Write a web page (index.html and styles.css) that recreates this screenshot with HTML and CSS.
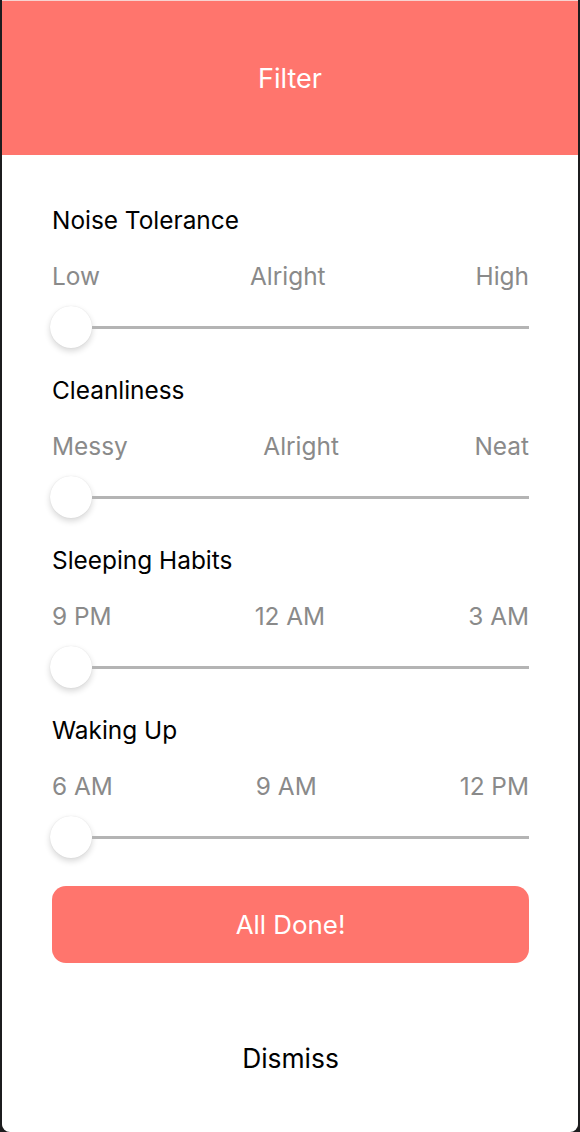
FILE: index.html
```html
<!DOCTYPE html>
<html>
<head>
<meta charset="utf-8">
<link rel="stylesheet" href="styles.css">
</head>
<body>
<div class="screen">
  <header class="header"><h1 class="title">Filter</h1></header>
  <main class="content">
    <section class="filter">
      <h2 class="filter-name">Noise Tolerance</h2>
      <div class="scale"><span>Low</span><span>Alright</span><span>High</span></div>
      <div class="slider"><div class="thumb"></div><div class="track"></div></div>
    </section>
    <section class="filter">
      <h2 class="filter-name">Cleanliness</h2>
      <div class="scale"><span>Messy</span><span>Alright</span><span>Neat</span></div>
      <div class="slider"><div class="thumb"></div><div class="track"></div></div>
    </section>
    <section class="filter">
      <h2 class="filter-name">Sleeping Habits</h2>
      <div class="scale"><span>9 PM</span><span>12 AM</span><span>3 AM</span></div>
      <div class="slider"><div class="thumb"></div><div class="track"></div></div>
    </section>
    <section class="filter">
      <h2 class="filter-name">Waking Up</h2>
      <div class="scale"><span>6 AM</span><span>9 AM</span><span>12 PM</span></div>
      <div class="slider"><div class="thumb"></div><div class="track"></div></div>
    </section>
    <button class="done">All Done!</button>
    <button class="dismiss">Dismiss</button>
  </main>
</div>
</body>
</html>
```

FILE: styles.css
```css
html, body {
  margin: 0;
  padding: 0;
  background: #1c1c1e;
}
body {
  font-family: Inter, "Noto Sans", "Liberation Sans", sans-serif;
}
.screen {
  width: 576px;
  height: 1131px;
  margin: 1px 2px 0 2px;
  background: #ffffff;
  border-radius: 0 0 8px 8px;
  overflow: hidden;
  box-shadow: 0 -1px 0 #f7d3d1;
}
.header {
  height: 154px;
  background: #ff756d;
  display: flex;
  align-items: center;
  justify-content: center;
}
.title {
  margin: 0;
  color: #ffffff;
  font-size: 27px;
  font-weight: 400;
}
.content {
  padding: 47px 49px 0 50px;
  display: flex;
  flex-direction: column;
}
.filter {
  height: 170px;
  display: flex;
  flex-direction: column;
}
.filter-name {
  margin: 0;
  font-size: 24.4px;
  font-weight: 400;
  color: #000000;
  line-height: 36px;
}
.scale {
  margin-top: 20px;
  display: flex;
  justify-content: space-between;
  font-size: 24.4px;
  color: #8a8a8a;
  line-height: 36px;
}
.slider {
  margin-top: 12px;
  display: flex;
  align-items: center;
  height: 42px;
}
.thumb {
  width: 42px;
  height: 42px;
  margin-left: -2px;
  border-radius: 50%;
  background: #ffffff;
  box-shadow: 0 3px 6px rgba(0,0,0,0.16), 0 0 1px rgba(0,0,0,0.12);
  flex: none;
}
.track {
  flex: 1;
  height: 3px;
  background: #b4b4b4;
}
.done {
  margin-top: 4px;
  height: 77px;
  border: none;
  border-radius: 14px;
  background: #ff756d;
  color: #ffffff;
  font-family: inherit;
  font-size: 25.9px;
  padding: 0;
}
.dismiss {
  margin-top: 59px;
  align-self: center;
  background: none;
  border: none;
  font-family: inherit;
  font-size: 26.4px;
  color: #000000;
  padding: 0;
  line-height: 72px;
}
```
